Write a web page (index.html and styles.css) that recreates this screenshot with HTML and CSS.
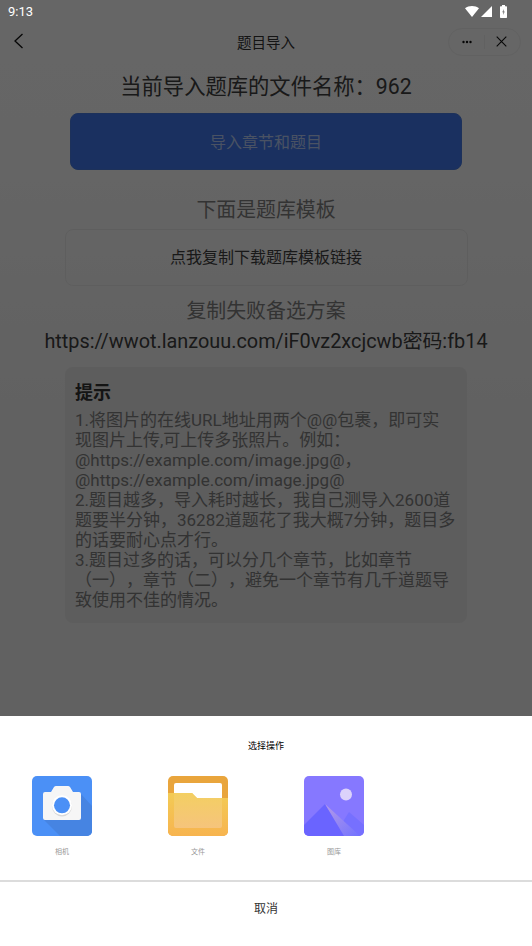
FILE: index.html
```html
<!DOCTYPE html>
<html lang="zh">
<head>
<meta charset="utf-8">
<title>题目导入</title>
<link rel="stylesheet" href="styles.css">
</head>
<body>
<div class="phone">
  <div class="status">
    <span class="time">9:13</span>
    <span class="status-icons">
      <svg width="14" height="11" viewBox="0 0 14 11"><path d="M0 2.2C2 .7 4.400 0 7 0s5 .7 7 2.200L7 11z" fill="#fff"/></svg>
      <svg width="12" height="11" viewBox="0 0 12 11"><path d="M11 0v11H0z" fill="#fff"/></svg>
      <svg width="7" height="13" viewBox="0 0 7 13"><path d="M2 0h3v1.200H6.300a.7.7 0 0 1 .7.700V12.300a.7.7 0 0 1-.7.700H.7a.7.7 0 0 1-.7-.7V1.900a.7.7 0 0 1 .7-.7H2z" fill="#fff"/><path d="M3.800 4 2.300 7.300h1.100L3.200 10l1.500-3.400H3.600z" fill="#666"/></svg>
    </span>
  </div>
  <header class="nav">
    <svg class="back" width="11" height="16" viewBox="0 0 11 16"><path d="M9.500 1 2 8l7.500 7" fill="none" stroke="#111" stroke-width="1.300"/></svg>
    <span class="nav-title">题目导入</span>
    <div class="capsule">
      <svg width="10" height="4" viewBox="0 0 10 4"><circle cx="1.500" cy="2" r="1.200" fill="#111"/><circle cx="5" cy="2" r="1.200" fill="#111"/><circle cx="8.500" cy="2" r="1.200" fill="#111"/></svg>
      <i class="capsule-sep"></i>
      <svg width="11" height="11" viewBox="0 0 11 11"><path d="M.7.700l9.600 9.600M10.300.7.700 10.300" stroke="#111" stroke-width="1.100" fill="none"/></svg>
    </div>
  </header>
  <main class="content">
    <h1 class="file-name">当前导入题库的文件名称：962</h1>
    <button class="primary">导入章节和题目</button>
    <h2 class="sub">下面是题库模板</h2>
    <button class="outline">点我复制下载题库模板链接</button>
    <h2 class="sub alt">复制失败备选方案</h2>
    <p class="link">https://wwot.lanzouu.com/iF0vz2xcjcwb密码:fb14</p>
    <section class="tips">
      <h3 class="tips-title">提示</h3>
      <p class="tips-text">1.将图片的在线URL地址用两个@@包裹，即可实现图片上传,可上传多张照片。例如：<br>@https://example.com/image.jpg@，<br>@https://example.com/image.jpg@<br>2.题目越多，导入耗时越长，我自己测导入2600道题要半分钟，36282道题花了我大概7分钟，题目多的话要耐心点才行。<br>3.题目过多的话，可以分几个章节，比如章节（一），章节（二），避免一个章节有几千道题导致使用不佳的情况。</p>
    </section>
  </main>
  <div class="mask"></div>
  <div class="sheet">
    <div class="sheet-title">选择操作</div>
    <div class="options">
      <div class="option">
        <svg width="60" height="60" viewBox="0 0 60 60">
          <defs><clipPath id="t1"><rect width="60" height="60" rx="5"/></clipPath></defs>
          <g clip-path="url(#t1)">
            <rect width="60" height="60" fill="#4b90f6"/>
            <path d="M49 18 60 30V60H28L11 43z" fill="#4684e2"/>
            <path d="M13 16h6l3-5q.8-1 2-1h12q1.200 0 2 1l3 5h6a2 2 0 0 1 2 2v24a2 2 0 0 1-2 2H13a2 2 0 0 1-2-2V18a2 2 0 0 1 2-2z" fill="#f6f6f6"/>
            <circle cx="30" cy="30.500" r="10" fill="#d8d8d8"/>
            <circle cx="30" cy="29.300" r="10" fill="#fff"/>
            <circle cx="30" cy="29.300" r="8" fill="#4b90f6"/>
          </g>
        </svg>
        <span class="option-label">相机</span>
      </div>
      <div class="option">
        <svg width="60" height="60" viewBox="0 0 60 60">
          <defs>
            <clipPath id="t2"><rect width="60" height="60" rx="5"/></clipPath>
            <linearGradient id="f1" x1="0" y1="0" x2="0" y2="1"><stop offset="0" stop-color="#f3cb55"/><stop offset="1" stop-color="#f7b44f"/></linearGradient>
            <linearGradient id="f2" x1="0" y1="0" x2="0" y2="1"><stop offset="0" stop-color="#f3cf62"/><stop offset="1" stop-color="#f6c47c"/></linearGradient>
          </defs>
          <g clip-path="url(#t2)">
            <rect width="60" height="60" fill="#e9a53c"/>
            <path d="M6 9a2 2 0 0 1 2-2h44a2 2 0 0 1 2 2v17H6z" fill="#fff"/>
            <path d="M0 17H24l5 5h31v38H0z" fill="url(#f1)"/>
            <path d="M6 17H24l5 5h25v28a2 2 0 0 1-2 2H8a2 2 0 0 1-2-2z" fill="url(#f2)"/>
          </g>
        </svg>
        <span class="option-label">文件</span>
      </div>
      <div class="option">
        <svg width="60" height="60" viewBox="0 0 60 60">
          <defs>
            <clipPath id="t3"><rect width="60" height="60" rx="5"/></clipPath>
            <linearGradient id="g1" x1="0" y1="0" x2="1" y2="1"><stop offset="0" stop-color="#b49ae8"/><stop offset="1" stop-color="#7272ff"/></linearGradient>
          </defs>
          <g clip-path="url(#t3)">
            <rect width="60" height="60" fill="#8678ff"/>
            <circle cx="42" cy="18.500" r="6" fill="#dcd2fb"/>
            <path d="M45 36 60 49V60H30z" fill="#7670ff"/>
            <path d="M21 28 0 49V60H42z" fill="#6a64ff"/>
            <path d="M21 28 56 60H40z" fill="url(#g1)"/>
          </g>
        </svg>
        <span class="option-label">图库</span>
      </div>
    </div>
    <div class="sheet-divider"></div>
    <div class="cancel">取消</div>
  </div>
</div>
</body>
</html>
```
FILE: styles.css
```css
* { box-sizing: border-box; }
html, body { margin: 0; padding: 0; }
body { font-family: Roboto, "Noto Sans CJK SC", sans-serif; text-spacing-trim: space-all; }
.phone {
  position: relative;
  width: 532px;
  height: 946px;
  overflow: hidden;
  background: linear-gradient(#ffffff 0, #fcfcfc 180px, #f3f3f3 400px, #f3f3f3 100%);
}
.status {
  position: relative;
  z-index: 2;
  height: 22px;
  padding: 0 25px 0 8px;
  display: flex;
  align-items: center;
  justify-content: space-between;
  background: #666;
}
.time { color: #fff; font-size: 13px; }
.status-icons { display: flex; align-items: center; gap: 2px; }
.status-icons svg:last-child { margin-left: 5px; }
.nav {
  position: relative;
  height: 38px;
  display: flex;
  align-items: center;
  justify-content: space-between;
  padding: 0 11px 0 13px;
}
.back { margin-top: -1px; }
.nav-title {
  position: absolute;
  left: 0;
  right: 0;
  text-align: center;
  color: #333;
  font-size: 14.5px;
}
.capsule {
  position: relative;
  width: 73px;
  height: 28px;
  border: 1px solid #f3f3f3;
  border-radius: 14px;
  display: flex;
  align-items: center;
  justify-content: space-between;
  padding: 0 13px 0 13px;
  margin-top: 1px;
}
.capsule-sep { width: 1px; height: 14px; background: #f3f3f3; }
.content { display: flex; flex-direction: column; align-items: center; padding-top: 12px; }
.file-name {
  margin: 0;
  font-size: 21.3px;
  font-weight: 400;
  line-height: 30px;
  color: #404040;
}
.primary {
  margin-top: 11px;
  width: 392px;
  height: 57px;
  border: 1px solid #4a7ce0;
  border-radius: 8px;
  background: #4178f0;
  color: #b8cdf8;
  font: inherit;
  font-size: 16px;
  padding-bottom: 2px;
}
.sub {
  margin: 26px 0 0;
  font-size: 19.9px;
  font-weight: 400;
  line-height: 30px;
  color: #808080;
}
.outline {
  margin-top: 3px;
  width: 403px;
  height: 57px;
  background: transparent;
  border: 1px solid #ececec;
  border-radius: 8px;
  color: #404040;
  font: inherit;
  font-size: 16px;
  padding-bottom: 4px;
}
.sub.alt { margin-top: 11px; }
.link {
  margin: 0;
  font-size: 19.86px;
  line-height: 30px;
  color: #404040;
  white-space: nowrap;
}
.tips {
  margin-top: 10px;
  width: 402px;
  height: 256px;
  padding: 11px 11px 10px 10px;
  border-radius: 8px;
  background: #e8e8e8;
}
.tips-title { margin: 0; font-size: 18px; font-weight: 700; line-height: 30px; color: #333; }
.tips-text { margin: 2px 0 0; font-size: 17px; line-height: 20px; color: #808080; }
.mask { position: absolute; inset: 0; z-index: 1; background: rgba(0,0,0,.6); }
.sheet {
  position: absolute;
  z-index: 3;
  left: 0;
  right: 0;
  bottom: 0;
  height: 230px;
  background: #fff;
  display: flex;
  flex-direction: column;
}
.sheet-title {
  text-align: center;
  font-size: 9px;
  line-height: 12px;
  margin-top: 24px;
  color: #000;
}
.options { display: flex; gap: 76px; padding: 24px 0 0 32px; height: 128px; }
.option { width: 60px; display: flex; flex-direction: column; align-items: center; }
.option-label { margin-top: 11px; font-size: 7px; line-height: 10px; color: #999; }
.sheet-divider { height: 2px; background: #dcdcdc; }
.cancel {
  text-align: center;
  font-size: 12px;
  line-height: 16px;
  margin-top: 19px;
  color: #333;
}
```
